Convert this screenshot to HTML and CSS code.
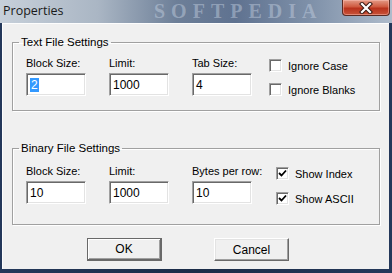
FILE: index.html
```html
<!DOCTYPE html>
<html>
<head>
<meta charset="utf-8">
<link rel="stylesheet" href="styles.css">
</head>
<body>
<div class="window">
  <div class="titlebar">
    <span class="title">Properties</span>
    <span class="watermark">SOFTPEDIA</span>
    <span class="close">
      <svg width="18" height="12" viewBox="0 0 18 12">
        <path d="M5 2 L13 10 M13 2 L5 10" stroke="#3a1a14" stroke-width="4.2" stroke-linecap="square"/>
        <path d="M5 2 L13 10 M13 2 L5 10" stroke="#ffffff" stroke-width="2.2" stroke-linecap="square"/>
      </svg>
    </span>
  </div>
  <div class="client">
    <fieldset class="group g1">
      <legend>Text File Settings</legend>
      <div class="fields">
        <div class="field"><span class="lbl">Block Size:</span><div class="input"><span class="sel">2</span></div></div>
        <div class="field"><span class="lbl">Limit:</span><div class="input">1000</div></div>
        <div class="field"><span class="lbl">Tab Size:</span><div class="input">4</div></div>
        <div class="checks">
          <div class="check"><span class="box"></span>Ignore Case</div>
          <div class="check"><span class="box"></span>Ignore Blanks</div>
        </div>
      </div>
    </fieldset>
    <fieldset class="group g2">
      <legend>Binary File Settings</legend>
      <div class="fields">
        <div class="field"><span class="lbl">Block Size:</span><div class="input">10</div></div>
        <div class="field"><span class="lbl">Limit:</span><div class="input">1000</div></div>
        <div class="field"><span class="lbl">Bytes per row:</span><div class="input">10</div></div>
        <div class="checks">
          <div class="check"><span class="box"><svg width="9" height="9" viewBox="0 0 9 9"><path d="M1 4 L3.5 6.5 L8 1.5" fill="none" stroke="#000" stroke-width="1.8"/></svg></span>Show Index</div>
          <div class="check"><span class="box"><svg width="9" height="9" viewBox="0 0 9 9"><path d="M1 4 L3.5 6.5 L8 1.5" fill="none" stroke="#000" stroke-width="1.8"/></svg></span>Show ASCII</div>
        </div>
      </div>
    </fieldset>
    <div class="buttons">
      <div class="btn default">OK</div>
      <div class="btn">Cancel</div>
    </div>
  </div>
</div>
</body>
</html>
```
FILE: styles.css
```css
html, body {
  margin: 0;
  padding: 0;
  background: #1b2c48;
}
.window {
  width: 392px;
  height: 273px;
  background: linear-gradient(90deg, #24385a 0%, #1b2c48 50%, #24385a 100%);
  display: flex;
  flex-direction: column;
  font-family: "Liberation Sans", Arial, sans-serif;
  font-size: 11px;
  color: #000;
  overflow: hidden;
}
.titlebar {
  height: 23px;
  flex: none;
  position: relative;
  display: flex;
  align-items: center;
  background: linear-gradient(90deg, #c7d0da 0%, #aab6c4 25%, #6d7f98 45%, #5f7290 60%, #8092aa 80%, #aebbcb 100%);
}
.title {
  margin-left: 3px;
  margin-top: -2px;
  font-family: "Open Sans", "DejaVu Sans", sans-serif;
  font-size: 12.5px;
  color: #1a1a1a;
  position: relative;
  z-index: 1;
}
.watermark {
  position: absolute;
  left: 154px;
  top: 0;
  height: 23px;
  line-height: 23px;
  font-family: "Liberation Serif", serif;
  font-weight: bold;
  font-size: 20px;
  letter-spacing: 6px;
  color: rgba(200, 212, 228, 0.45);
}
.close {
  position: absolute;
  right: 2px;
  top: 0;
  width: 46px;
  height: 15px;
  border: 1px solid #5a2a22;
  border-top: none;
  border-radius: 0 0 4px 4px;
  background: linear-gradient(180deg, #e39a86 0%, #cf5a40 45%, #b8321c 55%, #c8543a 100%);
  box-shadow: inset 0 0 0 1px rgba(255, 200, 190, 0.45);
  display: flex;
  align-items: center;
  justify-content: center;
  z-index: 2;
}
.client {
  flex: 1;
  margin: 0 3px 4px 2px;
  background: #f0f0f0;
  border-top: 1px solid #fdfdfd;
  border-left: 1px solid #fdfdfd;
  display: flex;
  flex-direction: column;
}
.group {
  margin: 12px 9px 0 9px;
  padding: 0 0 0 13px;
  border: 1px solid #a0a0a0;
  box-shadow: 1px 1px 0 #fff, inset 1px 1px 0 #fff;
  position: relative;
}
.group legend {
  padding: 0 2px;
  margin-left: -7px;
  font-size: 11.5px;
  line-height: 13px;
}
.g1 { height: 73px; }
.g2 { height: 81px; margin-top: 31px; }
.fields {
  display: flex;
  align-items: flex-start;
  margin-top: 8px;
}
.g2 .fields { margin-top: 10px; }
.field {
  display: flex;
  flex-direction: column;
  width: 60px;
  margin-right: 23px;
}
.lbl {
  line-height: 13px;
  height: 13px;
  margin-bottom: 3px;
  white-space: nowrap;
  font-size: 11px;
}
.input {
  height: 23px;
  box-sizing: border-box;
  background: #fff;
  border-top: 1px solid #a0a0a0;
  border-left: 1px solid #a0a0a0;
  border-right: 1px solid #fff;
  border-bottom: 1px solid #fff;
  box-shadow: inset 1px 1px 0 #696969, inset -1px -1px 0 #e3e3e3;
  padding: 4px 0 0 3px;
  font-size: 12px;
  line-height: 14px;
}
.sel {
  background: #3399ff;
  color: #fff;
  padding: 0 1px;
}
.checks {
  display: flex;
  flex-direction: column;
  gap: 11px;
  margin-left: -6px;
  margin-top: 2px;
}
.g2 .checks {
  margin-left: 1px;
  margin-top: 2px;
  gap: 12px;
}
.check {
  display: flex;
  align-items: center;
  height: 13px;
  white-space: nowrap;
  font-size: 11px;
}
.box {
  width: 13px;
  height: 13px;
  box-sizing: border-box;
  background: #fff;
  border-top: 1px solid #a0a0a0;
  border-left: 1px solid #a0a0a0;
  border-right: 1px solid #fff;
  border-bottom: 1px solid #fff;
  box-shadow: inset 1px 1px 0 #696969, inset -1px -1px 0 #e3e3e3;
  margin-right: 6px;
  display: flex;
  align-items: center;
  justify-content: center;
}
.buttons {
  display: flex;
  justify-content: flex-start;
  gap: 52px;
  margin: 13px 0 0 84px;
}
.btn {
  width: 75px;
  height: 23px;
  box-sizing: border-box;
  border-top: 1px solid #fff;
  border-left: 1px solid #fff;
  border-right: 1px solid #696969;
  border-bottom: 1px solid #696969;
  box-shadow: inset -1px -1px 0 #a0a0a0, inset 1px 1px 0 #e3e3e3;
  display: flex;
  align-items: center;
  justify-content: center;
  font-size: 12px;
}
.btn.default {
  border: 1px solid #696969;
  border-right: 2px solid #696969;
  border-bottom: 2px solid #696969;
  box-shadow: inset 1px 1px 0 #fff, inset -1px -1px 0 #a0a0a0;
}
```
